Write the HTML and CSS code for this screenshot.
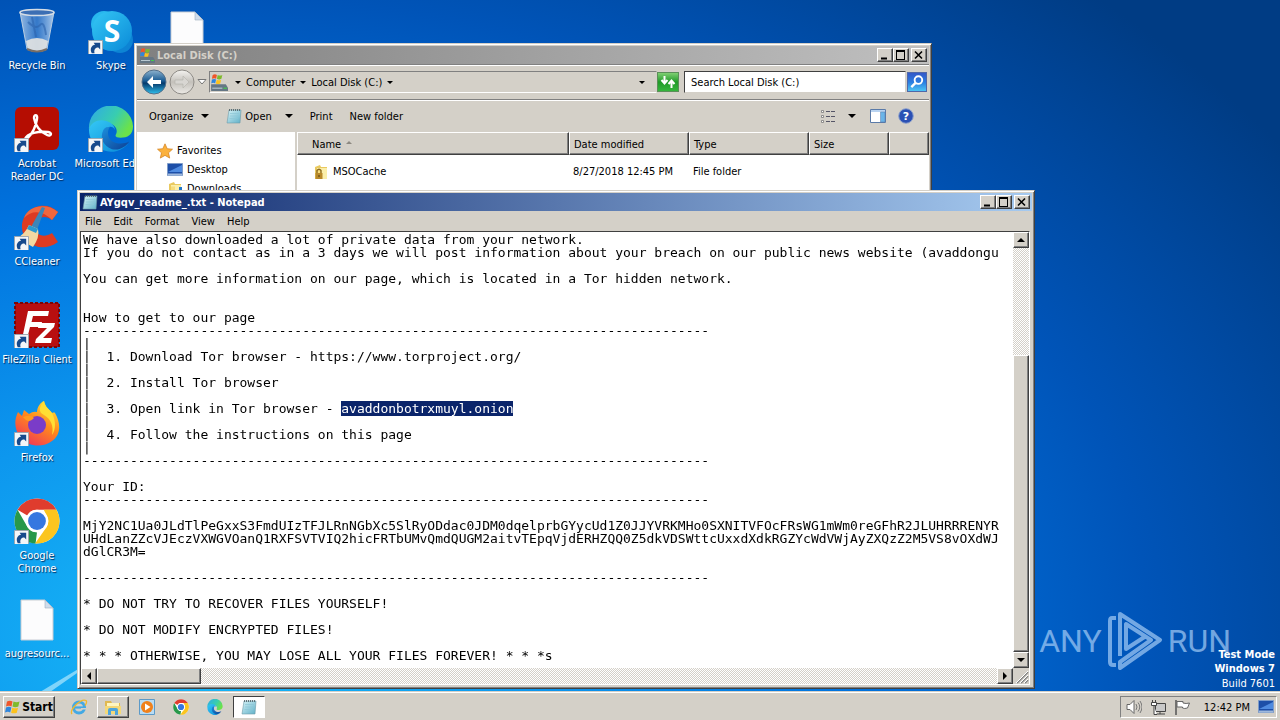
FILE: index.html
```
<!DOCTYPE html>
<html lang="en">
<head>
<meta charset="utf-8">
<title>Desktop</title>
<link rel="stylesheet" href="styles.css">
</head>
<body>
<svg class="defs" aria-hidden="true">
  <defs>
    <linearGradient id="gSky" x1="0" y1="0" x2="1" y2="1"><stop offset="0" stop-color="#35c8f5"/><stop offset="1" stop-color="#0a8ad8"/></linearGradient>
    <linearGradient id="gEdge" x1="0" y1="0" x2="1" y2="0.5"><stop offset="0" stop-color="#2fa8e8"/><stop offset="0.6" stop-color="#38cdb0"/><stop offset="1" stop-color="#6be24a"/></linearGradient>
    <linearGradient id="gDeep" x1="0" y1="0" x2="1" y2="1"><stop offset="0" stop-color="#1b8fdd"/><stop offset="1" stop-color="#0d3f94"/></linearGradient>
    <linearGradient id="gFox" x1="0.8" y1="0" x2="0.2" y2="1"><stop offset="0" stop-color="#ffe53b"/><stop offset="0.45" stop-color="#ff8a1c"/><stop offset="1" stop-color="#f0305c"/></linearGradient>
    <linearGradient id="gGlass" x1="0" y1="0" x2="1" y2="0"><stop offset="0" stop-color="#c9dcf0" stop-opacity=".75"/><stop offset=".5" stop-color="#5f94d4" stop-opacity=".55"/><stop offset="1" stop-color="#d4e5f6" stop-opacity=".8"/></linearGradient>
    <linearGradient id="gPad" x1="0" y1="0" x2="1" y2="1"><stop offset="0" stop-color="#d6f2f6"/><stop offset="1" stop-color="#5fb0c8"/></linearGradient>
    <linearGradient id="gBack" x1="0" y1="0" x2="0" y2="1"><stop offset="0" stop-color="#8fb4cf"/><stop offset=".45" stop-color="#1a5c94"/><stop offset=".55" stop-color="#063a6c"/><stop offset="1" stop-color="#2fc0ee"/></linearGradient>
    <linearGradient id="gFwd" x1="0" y1="0" x2="0" y2="1"><stop offset="0" stop-color="#f4f3f0"/><stop offset=".5" stop-color="#c4c1bb"/><stop offset="1" stop-color="#eceae6"/></linearGradient>
    <symbol id="shortcut" viewBox="0 0 16 16"><path d="M.5.5h15v15H.5z" fill="#f4f6f8" stroke="#9aa4ae"/><path d="M4 14C1.500 9 4 5.500 7.500 5L6 3h7v7l-2-2c-3 0-5 2-4 6z" fill="#174a8c"/></symbol>
    <symbol id="notepad" viewBox="0 0 16 16"><path d="M3 2h12l-1 13H1z" fill="url(#gPad)" stroke="#6f9aa8" stroke-width=".6"/><path d="M4 5.500h9M4 8h8.500M3.500 10.500h8.500" stroke="#8cc6d6" stroke-width=".7"/><path d="M3.500 1v2M5.500 1v2M7.500 1v2M9.500 1v2M11.500 1v2M13.500 1v2" stroke="#4b5a60" stroke-width=".8"/></symbol>
    <symbol id="flag" viewBox="0 0 16 16"><path d="M2 2.500q3-1.500 5.500 0L6.500 7.500Q4 6 1 7.500z" fill="#f0562a"/><path d="M8.500 2.500q3 1.500 6 0l-1.200 5q-3 1.500-5.800 0z" fill="#7fba2c"/><path d="M1 8.500Q4 7 6.400 8.500L5.200 13.500Q3 12 0 13.500z" fill="#2f86dc"/><path d="M7.300 8.700q3 1.300 5.700 0l-1.200 5q-3 1.300-5.700 0z" fill="#fcc21c"/></symbol>
    <symbol id="drive" viewBox="0 0 16 16"><path d="M1 10h13l2 3v3H1z" fill="#647684"/><path d="M2 13.500h9" stroke="#b8c8d0"/><path d="M12 13.500h3" stroke="#41d048"/><use href="#flag" x="1" y="0" width="11" height="11"/></symbol>
    <symbol id="folder" viewBox="0 0 16 16"><path d="M2 3l5-2 1 2h6v12H2z" fill="#e9c95f"/><path d="M4 4h10v11H4z" fill="#fbeea9"/><path d="M4 5.500h4v9L4 15z" fill="#f6dc7c"/></symbol>
    <symbol id="chrome" viewBox="0 0 48 48"><circle cx="24" cy="24" r="23.500" fill="#fff"/><path d="M24 .5A23.500 23.500 0 0 1 44.400 12.300H24A11.700 11.700 0 0 0 13.900 18.200L3.700 12.300A23.500 23.500 0 0 1 24 .5z" fill="#df3c2e"/><path d="M3.700 12.300L13.900 29.900A11.700 11.700 0 0 0 24 35.700L22.500 47.500A23.500 23.500 0 0 1 3.700 12.300z" fill="#28984a"/><path d="M44.400 12.300A23.500 23.500 0 0 1 22 47.500L34.200 29.900A11.700 11.700 0 0 0 34 18l-3-5.700z" fill="#fbc51f"/><circle cx="24" cy="24" r="11.700" fill="#fff"/><circle cx="24" cy="24" r="9.300" fill="#3577e0"/></symbol>
    <symbol id="edge" viewBox="0 0 48 48"><path d="M1 24A23 23 0 0 1 47 21c0 9-6 12-13 12-4 0-6-1-5-3 3-5-1-12-9-12C10 18 2 22 1 24z" fill="url(#gEdge)"/><path d="M1 24C4 16 12 13 20 16c5 2 8 5 8 9-1-3-4-4-6-3-5 3-7 13 1 19 6 4 13 3 19-2A23 23 0 0 1 1 24z" fill="url(#gSky)"/><path d="M16 25c-4 8 0 17 9 20 7 2 14-2 18-8-8 4-18 2-21-4-2-4-1-9 1-11-3 0-5 0-7 3z" fill="url(#gDeep)"/></symbol>
    <symbol id="page" viewBox="0 0 34 42"><path d="M1 1h24l8 8v32H1z" fill="#fcfcfd" stroke="#c8cdd4"/><path d="M25 1v8h8z" fill="#cfdceb" stroke="#9fb0c0" stroke-width=".6"/></symbol>
    <symbol id="screen" viewBox="0 0 16 14"><path d="M.5.5h15v12H.5z" fill="#1d4fa8" stroke="#7f9cc8"/><path d="M1 9L15 2v7z" fill="#4f8be0"/><path d="M1 10.500h14v2H1z" fill="#9fb8dc"/></symbol>
  </defs>
</svg>

<main class="desktop">
  <svg class="beam" viewBox="0 0 80 60" aria-hidden="true"><path d="M40 60L80 36v3L50 60z" fill="#c8f2ff" opacity=".6"/></svg>

  <section class="icons" aria-label="Desktop icons">
    <a class="icon" href="#"><svg viewBox="0 0 46 46"><path d="M6 4l7 37q10 5 20 0l7-37z" fill="url(#gGlass)" stroke="#b9cde2"/><path d="M12 33q11-6 22 0l-2 9q-9 4-18 0z" fill="#e4e4e2" opacity=".9"/><path d="M13 41q10 5 20 0" stroke="#786e66" stroke-width="2" fill="none"/><ellipse cx="23" cy="4.500" rx="17" ry="3" fill="#3c6fb4" stroke="#d4dde6" stroke-width="1.500"/><path d="M14 14q8 8 12 3t6 10M18 9l4 20" stroke="#2c62ac" stroke-width="2" fill="none" opacity=".6"/></svg><span>Recycle Bin</span></a>
    <a class="icon" href="#"><svg viewBox="0 0 46 46"><circle cx="16" cy="16" r="13" fill="#28b8ee"/><circle cx="32" cy="32" r="13" fill="#0d84d4"/><circle cx="24" cy="23" r="20" fill="url(#gSky)"/><text x="24" y="34" class="skype-s">S</text><use href="#shortcut" x="0" y="32" width="15" height="15"/></svg><span>Skype</span></a>
    <a class="icon" href="#"><svg viewBox="0 0 46 46"><use href="#page" x="8" y="3" width="34" height="42"/></svg></a>

    <a class="icon" href="#"><svg viewBox="0 0 46 46"><rect x="1" y="1" width="44" height="43" rx="6" fill="#b50d02"/><path d="M11 33C13 27 25 25 34 26c5 1 3 5-1 3C26 26 21 19 20 12c0-4 4-4 3 1C22 20 18 28 13 33c-2 2-4 1-2 0z" fill="none" stroke="#fff" stroke-width="2.400"/><use href="#shortcut" x="0" y="32" width="15" height="15"/></svg><span>Acrobat<br>Reader DC</span></a>
    <a class="icon" href="#"><svg viewBox="0 0 46 46"><use href="#edge" x="0" y="0" width="46" height="46"/><use href="#shortcut" x="0" y="32" width="15" height="15"/></svg><span>Microsoft Edge</span></a>

    <a class="icon first" href="#"><svg viewBox="0 0 46 46"><path d="M44 8C30-6 7 5 8 24c1 16 19 26 36 14l-6-9c-9 6-18 1-17-7 1-9 10-12 17-6z" fill="#dc3b22"/><path d="M44 8C32-2 14 2 10 14c8-9 20-7 28 2z" fill="#f0673e"/><path d="M28 3l3 1-8 22-6-3z" fill="#3c86b8"/><path d="M15 21l9 4q2 8-5 18L3 34q8-4 12-13z" fill="#f3d9a2"/><path d="M15 21l9 4-2 4-9-4z" fill="#2b9ad0"/><use href="#shortcut" x="0" y="32" width="15" height="15"/></svg><span>CCleaner</span></a>

    <a class="icon first" href="#"><svg viewBox="0 0 46 46"><rect x="1" y="1" width="44" height="44" fill="#b80f10" stroke="#7c0505" stroke-width="2" stroke-dasharray="3 2"/><path d="M14 9h21l-1 5H19l-1.500 6H28l-1 5H16l-3 12H8zM25 21h16l-1 4-11 11h9l-1 5H21l1-4 11-11h-9z" fill="#fff"/><use href="#shortcut" x="0" y="32" width="15" height="15"/></svg><span>FileZilla Client</span></a>

    <a class="icon first" href="#"><svg viewBox="0 0 46 46"><path d="M4 12l4 4 2-6 5 4q4-3 8-2c0-5 4-10 7-11 1 6 5 8 8 12 3-1 3 0 3 0 6 10 6 22-3 28-9 7-24 6-31-3C0 30 0 20 4 12z" fill="url(#gFox)"/><path d="M30 1c1 6 5 8 8 12 4 8 4 16 0 22 2-9-1-16-8-20-6-3-5-8 0-14z" fill="#ffde34"/><circle cx="23" cy="25" r="9" fill="#7a3cc8"/><path d="M9 17q8-3 11 1c-4 4-7 4-11-1z" fill="#ff9a20"/><use href="#shortcut" x="0" y="32" width="15" height="15"/></svg><span>Firefox</span></a>

    <a class="icon first" href="#"><svg viewBox="0 0 46 46"><use href="#chrome" x="0" y="0" width="46" height="46"/><use href="#shortcut" x="0" y="32" width="15" height="15"/></svg><span>Google<br>Chrome</span></a>

    <a class="icon first" href="#"><svg viewBox="0 0 46 46"><use href="#page" x="6" y="3" width="34" height="42"/></svg><span>augresourc...</span></a>
  </section>

  <div class="watermark" aria-label="ANY RUN">
    <span>ANY</span>
    <svg viewBox="0 0 56 62" aria-hidden="true"><g fill="none" stroke="currentColor" stroke-width="4" stroke-linejoin="round"><path d="M9 8H5q-2 0-2 3v41q0 3 3 3h3"/><path d="M13 46V4l40 26-40 28v-6l31-22-25-16v25l20-13"/></g></svg>
    <span>RUN</span>
  </div>
  <div class="build"><b>Test Mode</b><b>Windows 7</b><span>Build 7601</span></div>

  <section class="window explorer" aria-label="Local Disk (C:)">
    <header class="titlebar inactive">
      <svg class="i16"><use href="#drive"/></svg><h2>Local Disk (C:)</h2>
      <div class="caption">
        <button aria-label="Minimize"><svg viewBox="0 0 16 14"><path d="M4 9.500h6v2H4z"/></svg></button>
        <button aria-label="Maximize"><svg viewBox="0 0 16 14"><path d="M3 2h9v10H3zM4 4v7h7V4z" fill-rule="evenodd"/></svg></button>
        <button class="close" aria-label="Close"><svg viewBox="0 0 16 14"><path d="M4 3.500l7 7M11 3.500l-7 7" stroke="#000" stroke-width="1.600"/></svg></button>
      </div>
    </header>
    <nav class="navbar">
      <button class="round" aria-label="Back"><svg viewBox="0 0 26 26"><circle cx="13" cy="13" r="12" fill="url(#gBack)" stroke="#55708a"/><path d="M12 7l-6 6 6 6v-4h8v-4h-8z" fill="#fff"/></svg></button>
      <button class="round" aria-label="Forward"><svg viewBox="0 0 26 26"><circle cx="13" cy="13" r="12" fill="url(#gFwd)" stroke="#8e8b86"/><path d="M14 7l6 6-6 6v-4H6v-4h8z" fill="#d8d6d2" stroke="#b4b1ab" stroke-width=".6"/></svg></button>
      <svg class="chev" viewBox="0 0 10 8"><path d="M1 1.500h8L5 6z" fill="#fff" stroke="#777"/></svg>
      <div class="address">
        <svg class="i18"><use href="#drive"/></svg>
        <i class="tri"></i><a href="#">Computer</a><i class="tri"></i><a href="#">Local Disk (C:)</a><i class="tri"></i><i class="tri end"></i>
      </div>
      <button class="refresh" aria-label="Refresh"><svg viewBox="0 0 20 18"><path d="M6.500 3v6M3.500 7l3 3.500 3-3.500M13.500 15V9M10.500 11l3-3.500 3 3.500" fill="none" stroke="#fff" stroke-width="2"/></svg></button>
      <input class="search" type="text" aria-label="Search" value="Search Local Disk (C:)">
      <button class="find" aria-label="Find"><svg viewBox="0 0 19 19"><circle cx="11" cy="7.500" r="4" fill="none" stroke="#fff" stroke-width="2"/><path d="M8 10.500L3.500 15" stroke="#fff" stroke-width="2.500"/></svg></button>
    </nav>
    <div class="toolbar">
      <button>Organize<i class="tri"></i></button>
      <button class="open"><svg class="i16"><use href="#notepad"/></svg>Open<i class="tri wide"></i></button>
      <button>Print</button>
      <button>New folder</button>
      <div class="views">
        <button aria-label="Change view"><svg class="i16" viewBox="0 0 16 16"><path d="M1.500 2.500h2v2h-2zM1.500 7.500h2v2h-2zM1.500 12.500h2v2h-2z" fill="#fff" stroke="#777" stroke-width=".8"/><path d="M6 3.500h4M11 3.500h4M6 8.500h4M11 8.500h4M6 13.500h4M11 13.500h4" stroke="#556"/></svg><i class="tri"></i></button>
        <button aria-label="Preview pane"><svg class="i16" viewBox="0 0 16 16"><path d="M.5 1.500h15v13H.5z" fill="#fff" stroke="#5a7aa8"/><path d="M1 2h14v2H1z" fill="#b9d3f0"/><path d="M10.500 4h4.500v10h-4.500z" fill="#6ab4e8" stroke="#5a7aa8" stroke-width=".5"/></svg></button>
        <button aria-label="Help"><svg class="i16" viewBox="0 0 16 16"><circle cx="8" cy="8" r="7.300" fill="#2b50b4" stroke="#8ea2cc"/><text x="8" y="12" class="q">?</text></svg></button>
      </div>
    </div>
    <div class="panes">
      <aside class="tree">
        <a class="fav" href="#"><svg class="i16" viewBox="0 0 16 16"><path d="M8 .8l2.200 4.900 5.300.5-4 3.600 1.200 5.300L8 12.400l-4.700 2.700 1.200-5.300-4-3.600 5.300-.5z" fill="#fbb13c" stroke="#d07c1a" stroke-width=".7"/></svg>Favorites</a>
        <a href="#"><svg class="i16" viewBox="0 0 16 14"><use href="#screen"/></svg>Desktop</a>
        <a href="#"><svg class="i16"><use href="#folder"/><path d="M9 9h3V6h3v3h1l-3 5z" fill="#2277c8"/></svg>Downloads</a>
      </aside>
      <div class="list">
      <table class="files">
        <thead><tr><th class="c-name">Name <i class="sort"></i></th><th class="c-date">Date modified</th><th class="c-type">Type</th><th class="c-size">Size</th><th></th></tr></thead>
        <tbody>
          <tr><td><svg class="i16"><use href="#folder"/><path d="M2.500 9h7v6h-7z" fill="#b8892a"/><path d="M4 9V6.500q2-2.500 4 0V9" fill="none" stroke="#8c6a20" stroke-width="1.400"/><path d="M6 11v2" stroke="#503c10"/></svg>MSOCache</td><td>8/27/2018 12:45 PM</td><td>File folder</td><td></td><td></td></tr>
          <tr><td><svg class="i16"><use href="#folder"/></svg></td><td></td><td></td><td></td><td></td></tr>
        </tbody>
      </table>
      </div>
    </div>
  </section>

  <section class="window notepad" aria-label="Notepad">
    <header class="titlebar">
      <svg class="i16"><use href="#notepad"/></svg><h2>AYgqv_readme_.txt - Notepad</h2>
      <div class="caption">
        <button aria-label="Minimize"><svg viewBox="0 0 16 14"><path d="M4 9.500h6v2H4z"/></svg></button>
        <button aria-label="Maximize"><svg viewBox="0 0 16 14"><path d="M3 2h9v10H3zM4 4v7h7V4z" fill-rule="evenodd"/></svg></button>
        <button class="close" aria-label="Close"><svg viewBox="0 0 16 14"><path d="M4 3.500l7 7M11 3.500l-7 7" stroke="#000" stroke-width="1.600"/></svg></button>
      </div>
    </header>
    <nav class="menu"><button>File</button><button>Edit</button><button>Format</button><button>View</button><button>Help</button></nav>
    <div class="editor">
      <textarea id="note" wrap="off" spellcheck="false" aria-label="Document text">We have also downloaded a lot of private data from your network.
If you do not contact as in a 3 days we will post information about your breach on our public news website (avaddongu

You can get more information on our page, which is located in a Tor hidden network.


How to get to our page
--------------------------------------------------------------------------------
|
|  1. Download Tor browser - https://www.torproject.org/
|
|  2. Install Tor browser
|
|  3. Open link in Tor browser - avaddonbotrxmuyl.onion
|
|  4. Follow the instructions on this page
|
--------------------------------------------------------------------------------

Your ID:
--------------------------------------------------------------------------------

MjY2NC1Ua0JLdTlPeGxxS3FmdUIzTFJLRnNGbXc5SlRyODdac0JDM0dqelprbGYycUd1Z0JJYVRKMHo0SXNITVFOcFRsWG1mWm0reGFhR2JLUHRRRENYR
UHdLanZZcVJEczVXWGVOanQ1RXFSVTVIQ2hicFRTbUMvQmdQUGM2aitvTEpqVjdERHZQQ0Z5dkVDSWttcUxxdXdkRGZYcWdVWjAyZXQzZ2M5VS8vOXdWJ
dGlCR3M=

--------------------------------------------------------------------------------

* DO NOT TRY TO RECOVER FILES YOURSELF!

* DO NOT MODIFY ENCRYPTED FILES!

* * * OTHERWISE, YOU MAY LOSE ALL YOUR FILES FOREVER! * * *s</textarea>
      <div class="vbar"><button aria-label="Scroll up"><i class="up"></i></button><div class="track"></div><div class="thumb"></div><button aria-label="Scroll down"><i class="down"></i></button></div>
      <div class="hbar"><button aria-label="Scroll left"><i class="left"></i></button><div class="thumb"></div><div class="track"></div><button aria-label="Scroll right"><i class="right"></i></button></div>
      <svg class="grip" viewBox="0 0 16 16"><path d="M4 15L15 4M8 15l7-7M12 15l3-3" stroke="#808080" stroke-width="1.500"/><path d="M3 15L15 3M7 15l8-8M11 15l4-4" stroke="#fff"/></svg>
    </div>
  </section>
</main>

<footer class="taskbar">
  <button class="start"><svg class="i16"><use href="#flag"/></svg>Start</button>
  <div class="tasks">
    <button aria-label="Internet Explorer"><svg viewBox="0 0 18 18"><circle cx="9" cy="9.500" r="5.500" fill="none" stroke="#43a9e4" stroke-width="3"/><path d="M5 9.500h9" stroke="#43a9e4" stroke-width="2.200"/><path d="M11 11.500h6v-1.500h-6z" fill="#d4d0c8"/><path d="M2 16C-1 12 11 0 16 2.500q1.500 1.500-1 5" fill="none" stroke="#f0b82c" stroke-width="1.300"/></svg></button>
    <button class="raised" aria-label="Windows Explorer"><svg viewBox="0 0 18 18"><path d="M1 3h6l1 2h8v11H1z" fill="#e0b850"/><path d="M3 5h12v8H3z" fill="#fff5c0"/><path d="M1 8h16v8H1z" fill="#f4d878"/><path d="M4 17v-5q0-2 2-2h6q2 0 2 2v5h-3v-4H7v4z" fill="#4ea4dc"/></svg></button>
    <button aria-label="Media Player"><svg viewBox="0 0 18 18"><path d="M1.500 1.500h15v15h-15z" fill="#b9dcf4" stroke="#5c9ac8"/><circle cx="9" cy="9" r="6" fill="#f0811c"/><path d="M7 5.500l5.500 3.500L7 12.500z" fill="#fff"/></svg></button>
    <button aria-label="Chrome"><svg viewBox="0 0 18 18"><use href="#chrome" x="1" y="1" width="16" height="16"/></svg></button>
    <button aria-label="Edge"><svg viewBox="0 0 18 18"><use href="#edge" x="1" y="1" width="16" height="16"/></svg></button>
    <button class="pressed" aria-label="Notepad"><svg viewBox="0 0 18 18"><use href="#notepad" x="1" y="1" width="16" height="16"/></svg></button>
  </div>
  <div class="tray">
    <svg class="i16" viewBox="0 0 16 16"><path d="M1 5.500h3l4-4v13l-4-4H1z" fill="#fff" stroke="#666"/><path d="M10 5q2 3 0 6M12 3.500q3.500 4.500 0 9M14 2q4 6 0 12" fill="none" stroke="#777"/></svg>
    <svg class="i16" viewBox="0 0 16 16"><path d="M5.500 4.500h10v8h-10z" fill="#c8c8c8" stroke="#444"/><path d="M5 15h10M10 13v2" stroke="#444"/><path d="M1.500 3.500h5v3h-5zM2.500 1v2M5.500 1v2M4 7v8.500h3" fill="#fff" stroke="#444"/></svg>
    <svg class="i16" viewBox="0 0 16 16"><path d="M2 1v15" stroke="#555" stroke-width="1.500"/><path d="M3 2.500h6v1.500q3 1 6.500 0l-2 5q-3 1-5 0V8H3z" fill="#fff" stroke="#666"/></svg>
    <time>12:42 PM</time>
    <svg class="i16" viewBox="0 0 16 14"><use href="#screen"/></svg>
  </div>
</footer>
<script>
  const note = document.getElementById("note");
  const host = "avaddonbotrxmuyl.onion";
  const start = note.value.indexOf(host);
  note.focus({ preventScroll: true });
  note.setSelectionRange(start, start + host.length);
  note.scrollTop = 0;
  note.scrollLeft = 0;
</script>
</body>
</html>
```
FILE: styles.css
```
* { box-sizing: border-box; }

body {
  margin: 0;
  height: 100vh;
  display: flex;
  flex-direction: column;
  overflow: hidden;
  font: 11px/13px "DejaVu Sans Condensed", "Noto Sans", sans-serif;
  color: #000;
}

button {
  font: inherit;
  color: inherit;
  padding: 0;
  border: 0;
  background: none;
  display: flex;
  align-items: center;
  justify-content: center;
}

a { color: inherit; text-decoration: none; }
svg { display: block; flex: none; }
.defs { position: absolute; width: 0; height: 0; }
.i16 { width: 16px; height: 16px; }
.i18 { width: 18px; height: 18px; }

.tri {
  border: 3px solid transparent;
  border-top-color: #000;
  border-bottom: 0;
  flex: none;
}

/* Desktop */
.desktop {
  position: relative;
  flex: 1;
  overflow: hidden;
  background: radial-gradient(ellipse 1180px 800px at 16% 92%, #18baf8 0, #0d97ee 28%, #0072de 55%, #0054b8 80%, #003c84 110%);
}

.beam { position: absolute; left: 0; bottom: 0; width: 80px; height: 60px; }

.icons {
  display: grid;
  grid-template-columns: repeat(3, 74px);
  grid-auto-rows: 98px;
}

.icon {
  display: flex;
  flex-direction: column;
  align-items: center;
  gap: 5px;
  padding-top: 8px;
  color: #fff;
  text-align: center;
  white-space: nowrap;
  text-shadow: 1px 1px 1px #00285a;
}

.icon.first { grid-column: 1; }
.icon svg { width: 46px; height: 46px; }
.skype-s { font: bold 30px "Open Sans", sans-serif; fill: #fff; text-anchor: middle; text-shadow: none; }

.watermark {
  position: absolute;
  right: 49px;
  bottom: 20px;
  display: flex;
  align-items: center;
  gap: 5px;
  color: #a4ccf6;
  opacity: 0.7;
  font: 400 32px/32px "Liberation Sans Narrow", Roboto, sans-serif;
}

.watermark svg { width: 56px; height: 62px; }

.build {
  position: absolute;
  right: 5px;
  bottom: 0;
  display: flex;
  flex-direction: column;
  align-items: flex-end;
  color: #fff;
  line-height: 14px;
}

.build span { line-height: 16px; }

/* Windows */
.window {
  position: absolute;
  display: flex;
  flex-direction: column;
  padding: 2px;
  background: #d4d0c8;
  border: 1px solid;
  border-color: #d4d0c8 #404040 #404040 #d4d0c8;
  box-shadow: inset 1px 1px #fff, inset -1px -1px #808080;
}

.explorer { left: 134px; top: 43px; width: 798px; height: 300px; }
.notepad { left: 77px; top: 190px; width: 958px; height: 499px; }

.titlebar {
  display: flex;
  align-items: center;
  gap: 2px;
  height: 18px;
  padding: 0 2px;
  background: linear-gradient(90deg, #0a246a, #a6caf0);
  color: #fff;
}

.titlebar.inactive { background: linear-gradient(90deg, #808080, #c0c0c0); color: #d4d0c8; }
.titlebar h2 { flex: 1; margin: 0; font: inherit; font-weight: bold; }
.caption { display: flex; }

.caption button,
.vbar button,
.hbar button,
.thumb,
.start,
.raised {
  background: #d4d0c8;
  border: 1px solid;
  border-color: #fff #404040 #404040 #fff;
  box-shadow: inset -1px -1px #808080;
}

.caption button { width: 16px; height: 14px; }
.caption svg { width: 16px; height: 14px; }
.caption .close { margin-left: 2px; }

/* Explorer */
.navbar {
  display: flex;
  align-items: center;
  height: 36px;
  padding: 0 2px 0 4px;
  border: 1px solid #808080;
  border-width: 1px 0;
  box-shadow: inset 0 1px #fff, 0 1px #fff;
}

.round, .round svg { width: 26px; height: 26px; }
.round { margin-right: 2px; }
.chev { width: 10px; height: 8px; }

.address {
  flex: 1;
  display: flex;
  align-items: center;
  gap: 5px;
  height: 22px;
  margin-left: 2px;
  border: 1px solid;
  border-color: #808080 #d4d0c8 #fff #808080;
}

.address .tri:nth-of-type(1) { margin-left: 2px; }
.address .tri.end { margin: 0 11px 0 auto; }

.refresh { width: 22px; height: 20px; background: linear-gradient(#7fcf72, #1f9a28 50%, #35b53c); border: 1px solid #5a8f58; }
.refresh svg { width: 20px; height: 18px; }

.search {
  width: 222px;
  height: 22px;
  margin: 0 1px 0 5px;
  padding: 0 6px;
  border: 1px solid;
  border-color: #404040 #d4d0c8 #d4d0c8 #404040;
  background: #fff;
  font: inherit;
  color: #000;
}

.find { width: 20px; height: 20px; background: linear-gradient(#3458c8, #2a7ce0 50%, #4cc4f4); border: 1px solid #5068a8; }
.find svg { width: 18px; height: 18px; }

.toolbar {
  display: flex;
  align-items: center;
  height: 32px;
  padding: 0 15px 0 12px;
  gap: 17px;
}

.toolbar button { gap: 8px; }
.toolbar .tri { border-width: 4px; border-bottom: 0; }
.toolbar .open { gap: 3px; }
.toolbar .tri.wide { margin-left: 10px; }
.views { display: flex; gap: 14px; margin-left: auto; }
.views button { gap: 12px; }
.views button:last-child { margin-left: -2px; }
.q { font: bold 11px "DejaVu Sans", sans-serif; fill: #fff; text-anchor: middle; }

.panes { display: flex; flex: 1; min-height: 0; gap: 2px; overflow: hidden; }

.tree { width: 158px; padding: 9px 0 0 30px; background: #fff; }
.tree a { display: flex; align-items: center; gap: 4px; height: 19px; }
.tree .fav { margin-left: -10px; }

.list { flex: 1; background: #fff; }
.files { width: 100%; border-collapse: separate; border-spacing: 0; table-layout: fixed; }
.files th {
  height: 23px;
  padding: 1px 4px 0;
  text-align: left;
  font-weight: normal;
  background: #d4d0c8;
  border: 1px solid;
  border-color: #fff #404040 #404040 #fff;
  box-shadow: inset -1px -1px #808080;
}
.files .c-name { width: 272px; padding-left: 14px; }
.files .c-date, .files .c-type { width: 120px; }
.files .c-size { width: 80px; }
.files td { height: 19px; padding: 0 4px; }
.files tbody tr:first-child td { height: 33px; }
.files td:first-child { padding-left: 16px; }
.files td svg { display: inline-block; vertical-align: middle; margin-right: 4px; }
.sort { display: inline-block; vertical-align: 4px; margin-left: 2px; border: 3px solid transparent; border-top: 0; border-bottom-color: #8c8880; }

/* Notepad */
.menu { display: flex; gap: 12px; height: 20px; padding-left: 5px; }

.editor {
  flex: 1;
  min-height: 0;
  display: grid;
  grid-template: 1fr 16px / 1fr 16px;
  margin: 0 2px 1px 0;
  border: 1px solid;
  border-color: #404040 #fff #fff #404040;
  background: #fff;
}

textarea {
  width: 100%;
  height: 100%;
  margin: 0;
  padding: 1px 0 0 2px;
  border: 0;
  outline: 0;
  resize: none;
  overflow: hidden;
  background: transparent;
  color: #000;
  font: 13px/13px "DejaVu Sans Mono", "Liberation Mono", monospace;
  will-change: transform;
}

textarea::selection { background: #0a246a; color: #fff; }

.vbar { display: flex; flex-direction: column; }
.hbar { display: flex; }
.vbar button, .hbar button { width: 16px; height: 16px; flex: none; }
.track { background: repeating-conic-gradient(#fff 0 25%, #d4d0c8 0 50%) 0 0 / 2px 2px; }
.vbar .track { flex: 108; }
.vbar .thumb { flex: 297; }
.hbar .thumb { flex: 102; }
.hbar .track { flex: 800; }
.grip { width: 16px; height: 16px; background: #d4d0c8; }

.up, .down, .left, .right { border: 4px solid transparent; }
.up { border-top: 0; border-bottom-color: #000; }
.down { border-bottom: 0; border-top-color: #000; }
.left { border-left: 0; border-right-color: #000; }
.right { border-right: 0; border-left-color: #000; }

/* Taskbar */
.taskbar {
  display: flex;
  align-items: center;
  height: 28px;
  padding: 3px 3px 2px;
  background: #d4d0c8;
  border-top: 1px solid #fff;
  box-shadow: 0 -1px #d4d0c8;
  position: relative;
}

.start { gap: 1px; height: 22px; width: 52px; font-size: 12px; font-weight: bold; }
.tasks { display: flex; gap: 2px; margin-left: 8px; flex: 1; }
.tasks button { width: 32px; height: 22px; }
.tasks svg { width: 18px; height: 18px; }
.tasks .pressed { background: #fff; border: 1px solid; border-color: #404040 #fff #fff #404040; }

.tray {
  display: flex;
  align-items: center;
  gap: 8px;
  height: 22px;
  padding: 0 2px 0 5px;
  border: 1px solid;
  border-color: #808080 #fff #fff #808080;
}

.tray time { margin-left: 6px; }
```
